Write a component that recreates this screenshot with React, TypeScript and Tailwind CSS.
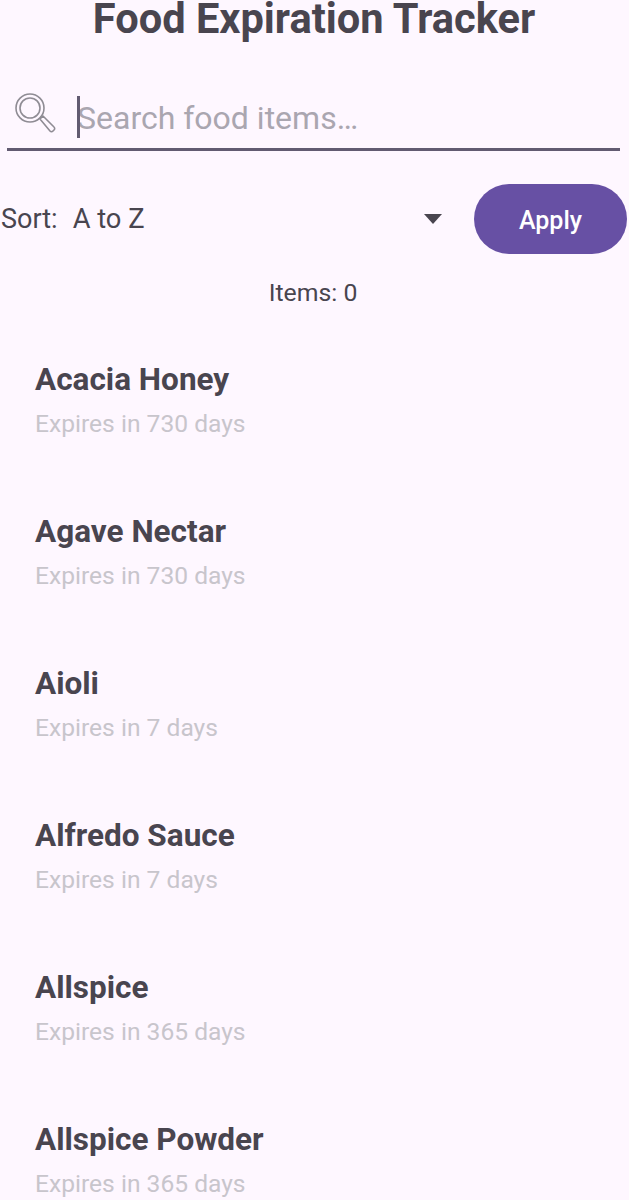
const foods = [
  { name: "Acacia Honey", days: 730 },
  { name: "Agave Nectar", days: 730 },
  { name: "Aioli", days: 7 },
  { name: "Alfredo Sauce", days: 7 },
  { name: "Allspice", days: 365 },
  { name: "Allspice Powder", days: 365 },
];

export default function App() {
  return (
    <div className="h-[1200px] overflow-hidden bg-[#fef7ff] font-['Roboto',sans-serif] text-[#49454f]">
      {/* title */}
      <h1 className="h-[38px] pr-px text-center text-[41.6px] leading-[38px] font-bold whitespace-nowrap">Food Expiration Tracker</h1>

      {/* search */}
      <div className="mr-[9px] ml-[7px] mt-[42px] flex h-[71px] items-center border-b-[3px] border-[#625b71] pb-[2px]">
        <svg className="ml-[6px] h-[44px] w-[44px]" viewBox="0 0 44 44" fill="none" stroke="#8f8c94" strokeWidth="1.6">
          <circle cx="17" cy="17" r="14" />
          <circle cx="17" cy="17" r="10" />
          <path d="M27 28l3-3 11 11a2 2 0 0 1 0 3l-1 1a2 2 0 0 1-3 0z" strokeLinejoin="round" />
        </svg>
        <div className="relative mt-[8px] ml-[20px] flex h-[42px] items-center">
          <span className="absolute top-0 left-0 h-[42px] w-[3px] bg-[#625b71]" />
          <span className="pt-[2px] text-[32px] text-[#aaa6b0]">Search food items…</span>
        </div>
      </div>

      {/* sort row */}
      <div className="mt-[33px] flex h-[70px] items-center">
        <span className="pl-px text-[27px]">Sort:</span>
        <span className="ml-[15px] text-[27.3px]">A to Z</span>
        <svg className="ml-auto h-[10px] w-[18px]" viewBox="0 0 18 10" fill="#49454f">
          <path d="M0 0h18L9 10z" />
        </svg>
        <button className="mr-[2px] ml-[32px] h-[70px] w-[153px] rounded-[35px] bg-[#6750a4] pt-[3px] text-[25px] font-medium text-white">
          Apply
        </button>
      </div>

      <p className="mt-[23px] pr-[3px] text-center text-[24.8px] leading-[32px]">Items: 0</p>

      {/* list */}
      <ul className="mt-[45px]">
        {foods.map((food) => (
          <li key={food.name} className="h-[152px] pt-[4px] pl-[35px]">
            <div className="text-[31.5px] leading-[44px] font-bold">{food.name}</div>
            <div className="text-[24.6px] leading-[44px] text-[#c8c5cc]">Expires in {food.days} days</div>
          </li>
        ))}
      </ul>
    </div>
  );
}
